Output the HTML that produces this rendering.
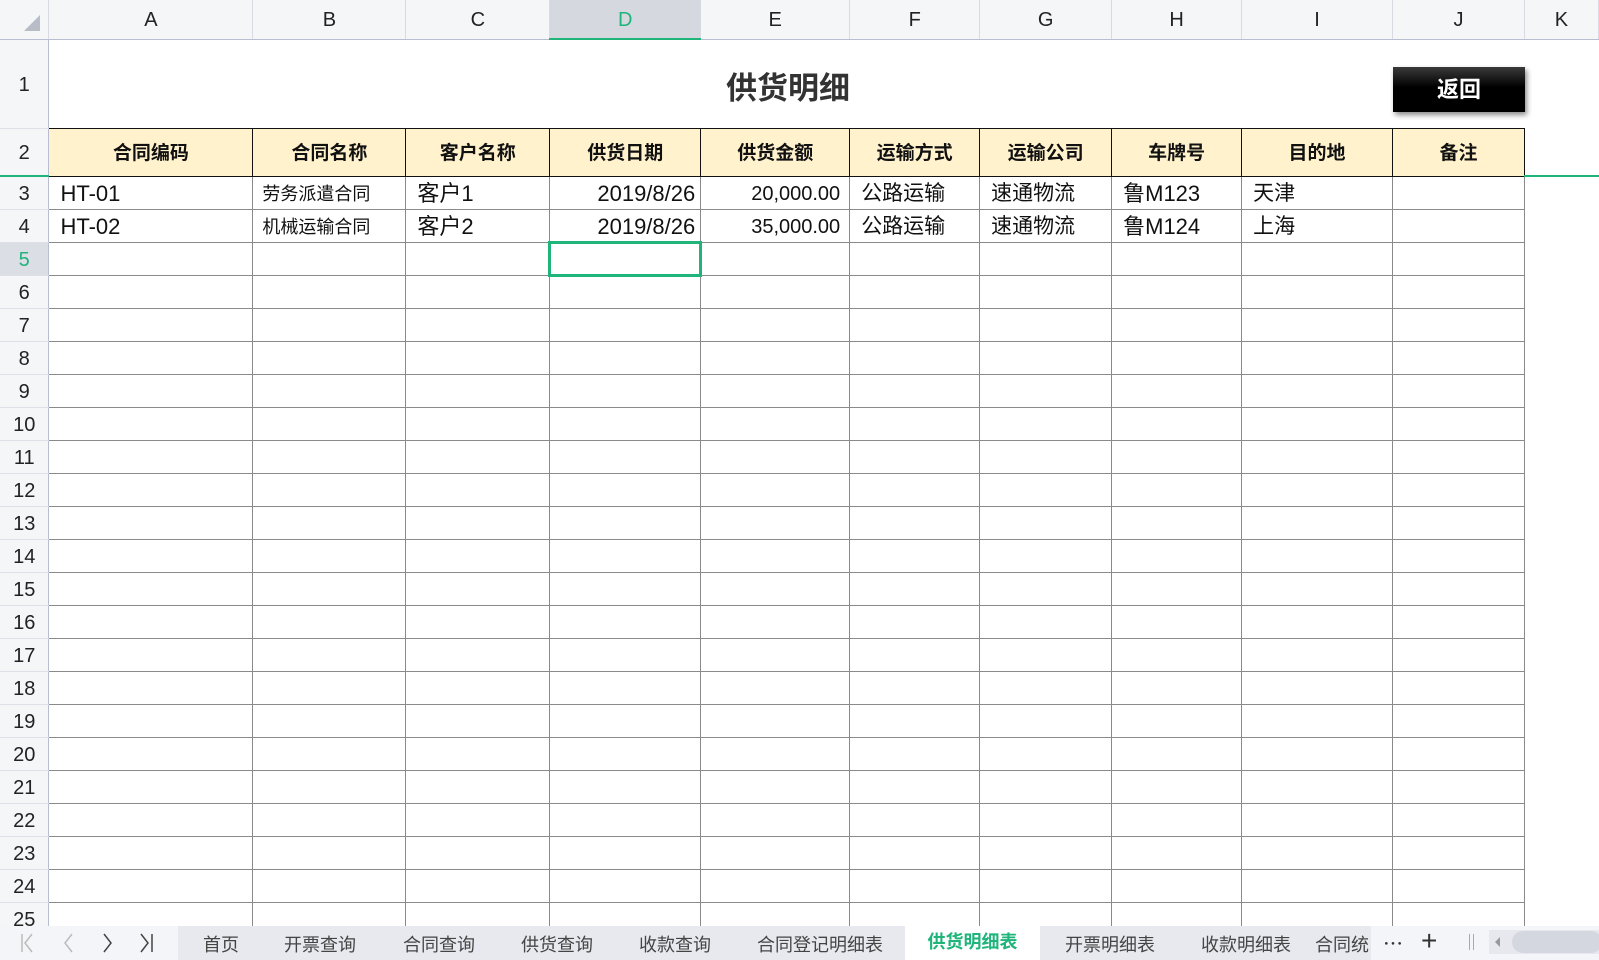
<!DOCTYPE html>
<html><head><meta charset="utf-8"><style>
*{margin:0;padding:0;box-sizing:border-box}
body{width:1599px;height:960px;overflow:hidden;background:#fff;font-family:"Liberation Sans","Noto Sans CJK SC",sans-serif;position:relative}
table{border-collapse:collapse;table-layout:fixed;position:absolute;left:0;top:0}
td{padding:0;overflow:hidden;white-space:nowrap;font-size:21px;color:#111;line-height:24px}
.ch{background:#f5f6f8;color:#222;text-align:center;font-size:20px;border-right:1px solid #d8dbe3;border-bottom:1px solid #b8bdd0;height:39px;padding-top:2px}
.ch.sel{background:#d5d8df;color:#1fb57a;border-bottom:2px solid #1fb57a}
.rh{background:#f5f6f8;color:#222;text-align:center;font-size:20px;border-right:1px solid #b8bdd0;border-bottom:1px solid #dde0e8;padding-top:3px}
.rh.sel{background:#dcdee5;color:#1fb57a}
.h{background:#fff2cc;border:1.5px solid #111;text-align:center;font-weight:bold;font-size:19px;padding-top:3px}
.d{border:1px solid #8a8a8a;padding-top:3px}
.l{padding-left:11px}
.r{text-align:right;padding-right:5px}
.n{border:none}
tr.x{height:33px}
</style></head><body>
<table>
<colgroup><col style="width:49px"><col style="width:204px"><col style="width:153px"><col style="width:144px"><col style="width:151px"><col style="width:149px"><col style="width:130px"><col style="width:132px"><col style="width:130px"><col style="width:151px"><col style="width:132px"><col style="width:74px"></colgroup>
<tr><td class="ch" style="position:relative"><div style="position:absolute;right:8px;bottom:8px;width:0;height:0;border-left:16px solid transparent;border-bottom:16px solid #b8bcc6"></div></td><td class="ch">A</td><td class="ch">B</td><td class="ch">C</td><td class="ch sel">D</td><td class="ch">E</td><td class="ch">F</td><td class="ch">G</td><td class="ch">H</td><td class="ch">I</td><td class="ch">J</td><td class="ch">K</td></tr>
<tr style="height:89px"><td class="rh">1</td><td colspan="11"></td></tr>
<tr style="height:48px"><td class="rh" style="border-bottom:2px solid #1fb57a">2</td><td class="h">合同编码</td><td class="h">合同名称</td><td class="h">客户名称</td><td class="h">供货日期</td><td class="h">供货金额</td><td class="h">运输方式</td><td class="h">运输公司</td><td class="h">车牌号</td><td class="h">目的地</td><td class="h">备注</td><td class="n" style="border-bottom:2px solid #1fb57a"></td></tr>
<tr class="x"><td class="rh">3</td><td class="d l" style="font-size:22px">HT-01</td><td class="d" style="font-size:18px;padding-left:9px">劳务派遣合同</td><td class="d l" style="font-size:22px">客户1</td><td class="d r" style="font-size:22px">2019/8/26</td><td class="d r" style="font-size:20px;padding-right:9px">20,000.00</td><td class="d l">公路运输</td><td class="d l">速通物流</td><td class="d l" style="font-size:22px">鲁M123</td><td class="d l">天津</td><td class="d"></td><td class="n"></td></tr>
<tr class="x"><td class="rh">4</td><td class="d l" style="font-size:22px">HT-02</td><td class="d" style="font-size:18px;padding-left:9px">机械运输合同</td><td class="d l" style="font-size:22px">客户2</td><td class="d r" style="font-size:22px">2019/8/26</td><td class="d r" style="font-size:20px;padding-right:9px">35,000.00</td><td class="d l">公路运输</td><td class="d l">速通物流</td><td class="d l" style="font-size:22px">鲁M124</td><td class="d l">上海</td><td class="d"></td><td class="n"></td></tr>
<tr class="x"><td class="rh sel">5</td><td class="d"></td><td class="d"></td><td class="d"></td><td class="d" style="border:3px solid #1fb57a"></td><td class="d"></td><td class="d"></td><td class="d"></td><td class="d"></td><td class="d"></td><td class="d"></td><td class="n"></td></tr>
<tr class="x"><td class="rh">6</td><td class="d"></td><td class="d"></td><td class="d"></td><td class="d"></td><td class="d"></td><td class="d"></td><td class="d"></td><td class="d"></td><td class="d"></td><td class="d"></td><td class="n"></td></tr>
<tr class="x"><td class="rh">7</td><td class="d"></td><td class="d"></td><td class="d"></td><td class="d"></td><td class="d"></td><td class="d"></td><td class="d"></td><td class="d"></td><td class="d"></td><td class="d"></td><td class="n"></td></tr>
<tr class="x"><td class="rh">8</td><td class="d"></td><td class="d"></td><td class="d"></td><td class="d"></td><td class="d"></td><td class="d"></td><td class="d"></td><td class="d"></td><td class="d"></td><td class="d"></td><td class="n"></td></tr>
<tr class="x"><td class="rh">9</td><td class="d"></td><td class="d"></td><td class="d"></td><td class="d"></td><td class="d"></td><td class="d"></td><td class="d"></td><td class="d"></td><td class="d"></td><td class="d"></td><td class="n"></td></tr>
<tr class="x"><td class="rh">10</td><td class="d"></td><td class="d"></td><td class="d"></td><td class="d"></td><td class="d"></td><td class="d"></td><td class="d"></td><td class="d"></td><td class="d"></td><td class="d"></td><td class="n"></td></tr>
<tr class="x"><td class="rh">11</td><td class="d"></td><td class="d"></td><td class="d"></td><td class="d"></td><td class="d"></td><td class="d"></td><td class="d"></td><td class="d"></td><td class="d"></td><td class="d"></td><td class="n"></td></tr>
<tr class="x"><td class="rh">12</td><td class="d"></td><td class="d"></td><td class="d"></td><td class="d"></td><td class="d"></td><td class="d"></td><td class="d"></td><td class="d"></td><td class="d"></td><td class="d"></td><td class="n"></td></tr>
<tr class="x"><td class="rh">13</td><td class="d"></td><td class="d"></td><td class="d"></td><td class="d"></td><td class="d"></td><td class="d"></td><td class="d"></td><td class="d"></td><td class="d"></td><td class="d"></td><td class="n"></td></tr>
<tr class="x"><td class="rh">14</td><td class="d"></td><td class="d"></td><td class="d"></td><td class="d"></td><td class="d"></td><td class="d"></td><td class="d"></td><td class="d"></td><td class="d"></td><td class="d"></td><td class="n"></td></tr>
<tr class="x"><td class="rh">15</td><td class="d"></td><td class="d"></td><td class="d"></td><td class="d"></td><td class="d"></td><td class="d"></td><td class="d"></td><td class="d"></td><td class="d"></td><td class="d"></td><td class="n"></td></tr>
<tr class="x"><td class="rh">16</td><td class="d"></td><td class="d"></td><td class="d"></td><td class="d"></td><td class="d"></td><td class="d"></td><td class="d"></td><td class="d"></td><td class="d"></td><td class="d"></td><td class="n"></td></tr>
<tr class="x"><td class="rh">17</td><td class="d"></td><td class="d"></td><td class="d"></td><td class="d"></td><td class="d"></td><td class="d"></td><td class="d"></td><td class="d"></td><td class="d"></td><td class="d"></td><td class="n"></td></tr>
<tr class="x"><td class="rh">18</td><td class="d"></td><td class="d"></td><td class="d"></td><td class="d"></td><td class="d"></td><td class="d"></td><td class="d"></td><td class="d"></td><td class="d"></td><td class="d"></td><td class="n"></td></tr>
<tr class="x"><td class="rh">19</td><td class="d"></td><td class="d"></td><td class="d"></td><td class="d"></td><td class="d"></td><td class="d"></td><td class="d"></td><td class="d"></td><td class="d"></td><td class="d"></td><td class="n"></td></tr>
<tr class="x"><td class="rh">20</td><td class="d"></td><td class="d"></td><td class="d"></td><td class="d"></td><td class="d"></td><td class="d"></td><td class="d"></td><td class="d"></td><td class="d"></td><td class="d"></td><td class="n"></td></tr>
<tr class="x"><td class="rh">21</td><td class="d"></td><td class="d"></td><td class="d"></td><td class="d"></td><td class="d"></td><td class="d"></td><td class="d"></td><td class="d"></td><td class="d"></td><td class="d"></td><td class="n"></td></tr>
<tr class="x"><td class="rh">22</td><td class="d"></td><td class="d"></td><td class="d"></td><td class="d"></td><td class="d"></td><td class="d"></td><td class="d"></td><td class="d"></td><td class="d"></td><td class="d"></td><td class="n"></td></tr>
<tr class="x"><td class="rh">23</td><td class="d"></td><td class="d"></td><td class="d"></td><td class="d"></td><td class="d"></td><td class="d"></td><td class="d"></td><td class="d"></td><td class="d"></td><td class="d"></td><td class="n"></td></tr>
<tr class="x"><td class="rh">24</td><td class="d"></td><td class="d"></td><td class="d"></td><td class="d"></td><td class="d"></td><td class="d"></td><td class="d"></td><td class="d"></td><td class="d"></td><td class="d"></td><td class="n"></td></tr>
<tr class="x"><td class="rh">25</td><td class="d"></td><td class="d"></td><td class="d"></td><td class="d"></td><td class="d"></td><td class="d"></td><td class="d"></td><td class="d"></td><td class="d"></td><td class="d"></td><td class="n"></td></tr>
</table>
<div style="position:absolute;left:698px;top:63px;width:180px;text-align:center;font-size:31px;font-weight:bold;color:#333">供货明细</div>
<div style="position:absolute;left:1393px;top:67px;width:132px;height:45px;background:linear-gradient(#3a3a3a,#000 45%,#000);box-shadow:2px 3px 5px rgba(0,0,0,.45);color:#fff;font-weight:bold;font-size:22px;text-align:center;line-height:45px">返回</div>
<div style="position:absolute;left:0;top:926px;width:1599px;height:34px;background:#e8e9ee;font-size:18px;color:#444">
 <div style="position:absolute;left:0;top:0;width:178px;height:34px;background:#f4f5f8">
  <svg width="178" height="34" style="position:absolute;left:0;top:0" fill="none" stroke-width="1.5">
   <path d="M22 8v18M32 8l-7 9 7 9" stroke="#bbb"/>
   <path d="M72 8l-7 9 7 9" stroke="#bbb"/>
   <path d="M104 8l7 9-7 9" stroke="#444"/>
   <path d="M141 8l7 9-7 9M152 8v18" stroke="#444"/>
  </svg>
 </div>
 <span style="position:absolute;left:203px;top:5px">首页</span>
 <span style="position:absolute;left:284px;top:5px">开票查询</span>
 <span style="position:absolute;left:403px;top:5px">合同查询</span>
 <span style="position:absolute;left:521px;top:5px">供货查询</span>
 <span style="position:absolute;left:639px;top:5px">收款查询</span>
 <span style="position:absolute;left:757px;top:5px">合同登记明细表</span>
 <div style="position:absolute;left:905px;top:0;width:135px;height:34px;background:#fff;color:#1fb57a;font-weight:bold;text-align:center;line-height:32px">供货明细表</div>
 <span style="position:absolute;left:1065px;top:5px">开票明细表</span>
 <span style="position:absolute;left:1201px;top:5px">收款明细表</span>
 <span style="position:absolute;left:1315px;top:5px">合同统</span>
 <div style="position:absolute;left:1371px;top:0;width:228px;height:34px;background:#f4f5f8">
  <span style="position:absolute;left:12px;top:2px;font-size:20px;color:#333">⋯</span>
  <span style="position:absolute;left:50px;top:-1px;font-size:28px;color:#333;font-weight:300">+</span>
  <span style="position:absolute;left:98px;top:8px;width:5px;height:16px;border-left:1px solid #aaa;border-right:1px solid #aaa"></span>
  <div style="position:absolute;left:118px;top:4px;width:110px;height:24px;background:#e6e8ee"></div>
  <span style="position:absolute;left:124px;top:11px;width:0;height:0;border-top:5px solid transparent;border-bottom:5px solid transparent;border-right:5px solid #999"></span>
  <div style="position:absolute;left:141px;top:5px;width:90px;height:22px;border-radius:11px;background:#d4d7df"></div>
 </div>
</div>
</body></html>
